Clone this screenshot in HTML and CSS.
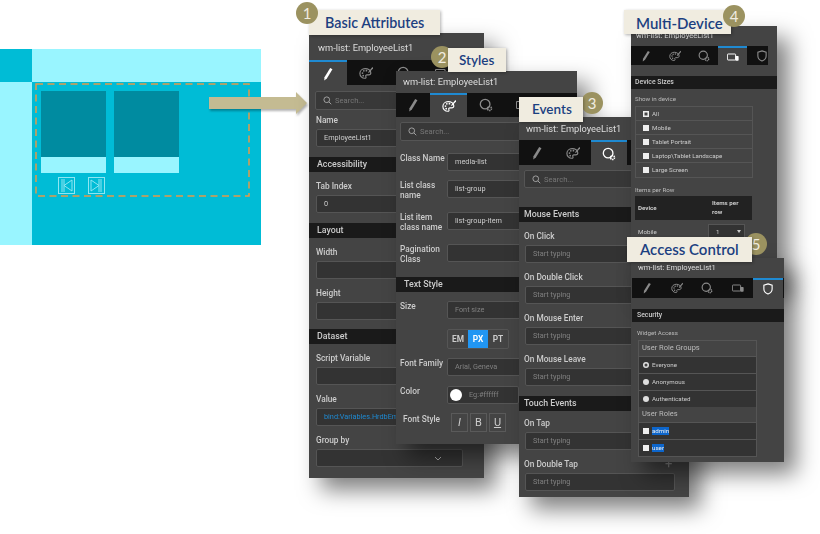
FILE: index.html
```html
<!DOCTYPE html>
<html lang="en">
<head>
  <meta charset="UTF-8" />
  <title>List widget properties</title>
  <link rel="stylesheet" href="styles.css">
</head>
<body>

  <svg class="defs" width="0" height="0">
    <symbol id="i-pencil" viewBox="0 0 16 16"><path d="M10.5 1.2l2.6 1.5-6.4 10.4-3 2.2.3-3.7z" fill="currentColor"/></symbol>
    <symbol id="i-palette" viewBox="0 0 16 16">
      <path d="M7 3C3.500 3 1 5.500 1 8.500S3.500 14 6.500 14c1.600 0 1.800-1 1.300-2-.5-1 .2-1.800 1.300-1.800H11c1.500 0 2.500-1 2.500-2.200C13.500 5 10.500 3 7 3z" fill="none" stroke="currentColor" stroke-width="1.300"/>
      <circle cx="4" cy="8" r="1" fill="currentColor"/><circle cx="5.500" cy="5.500" r="1" fill="currentColor"/><circle cx="8.500" cy="5.300" r="1" fill="currentColor"/><circle cx="4.800" cy="11" r="1" fill="currentColor"/>
      <path d="M15.300 1l-5 6 1 1 5-5.500z" fill="currentColor"/>
    </symbol>
    <symbol id="i-events" viewBox="0 0 16 16">
      <circle cx="7" cy="7" r="5.500" fill="none" stroke="currentColor" stroke-width="1.500"/>
      <circle cx="12" cy="12" r="2.300" fill="none" stroke="currentColor" stroke-width="1.800" stroke-dasharray="1.500 .7"/>
    </symbol>
    <symbol id="i-device" viewBox="0 0 16 16">
      <path d="M1.500 4h9a1 1 0 0 1 1 1v6a1 1 0 0 1-1 1h-9a1 1 0 0 1-1-1V5a1 1 0 0 1 1-1z" fill="none" stroke="currentColor" stroke-width="1.300"/>
      <rect x="11" y="6.500" width="4.500" height="6.500" rx="1" fill="currentColor"/>
    </symbol>
    <symbol id="i-shield" viewBox="0 0 16 16"><path d="M8 1.200l5.500 1.800v5c0 3.500-3 5.800-5.500 6.800-2.500-1-5.500-3.300-5.500-6.800V3z" fill="none" stroke="currentColor" stroke-width="1.500"/></symbol>
    <symbol id="i-search" viewBox="0 0 12 12"><circle cx="5" cy="5" r="3.800" fill="none" stroke="currentColor" stroke-width="1.200"/><path d="M8 8l3 3" stroke="currentColor" stroke-width="1.200"/></symbol>
  </svg>

  <div class="stage">

    <div class="wire">
      <div class="wire-corner"></div>
      <div class="wire-top"></div>
      <div class="wire-side"></div>
      <div class="wire-main">
        <div class="dash-box">
          <svg class="dash-line" width="215" height="114"><rect x="1" y="1" width="213" height="112" /></svg>
          <div class="cards">
            <div class="card"><div class="card-img"></div><div class="card-txt"></div></div>
            <div class="card"><div class="card-img"></div><div class="card-txt"></div></div>
          </div>
          <div class="pager">
            <span class="pager-btn"><svg width="17" height="17" viewBox="0 0 17 17"><path d="M4 2v13M6 2v13M14 3L6 8.500l8 5.500z"/></svg></span>
            <span class="pager-btn"><svg width="17" height="17" viewBox="0 0 17 17"><path d="M13 2v13M11 2v13M3 3l8 5.500L3 14z"/></svg></span>
          </div>
        </div>
      </div>
    </div>

    <svg class="arrow" width="104" height="30" viewBox="0 0 104 30"><path d="M0 7h87V2l11 11-11 11v-5H0z"/></svg>

    <!-- panel 1 -->
    <section class="panel p-basic">
      <div class="title">wm-list: EmployeeList1</div>
      <div class="tabs">
        <span class="tab on"><svg class="ico"><use href="#i-pencil"/></svg></span>
        <span class="tab"><svg class="ico"><use href="#i-palette"/></svg></span>
        <span class="tab"><svg class="ico"><use href="#i-events"/></svg></span>
        <span class="tab"><svg class="ico"><use href="#i-device"/></svg></span>
      </div>
      <div class="search"><svg class="ico-s"><use href="#i-search"/></svg>Search...</div>
      <div class="field first"><label>Name</label><div class="input val">EmployeeList1</div></div>
      <h3 class="sec">Accessibility</h3>
      <div class="field"><label>Tab Index</label><div class="input val">0</div></div>
      <h3 class="sec">Layout</h3>
      <div class="field"><label>Width</label><div class="input"></div></div>
      <div class="field"><label>Height</label><div class="input"></div></div>
      <h3 class="sec near">Dataset</h3>
      <div class="field"><label>Script Variable</label><div class="input"></div></div>
      <div class="field"><label>Value</label><div class="input link">bind:Variables.HrdbEm</div></div>
      <div class="field"><label>Group by</label>
        <div class="input chev"><svg width="8" height="5" viewBox="0 0 8 5"><path d="M1 1l3 3 3-3"/></svg></div>
      </div>
    </section>

    <!-- panel 2 -->
    <section class="panel p-styles">
      <div class="title">wm-list: EmployeeList1</div>
      <div class="tabs">
        <span class="tab"><svg class="ico"><use href="#i-pencil"/></svg></span>
        <span class="tab on"><svg class="ico"><use href="#i-palette"/></svg></span>
        <span class="tab"><svg class="ico"><use href="#i-events"/></svg></span>
        <span class="tab"><svg class="ico"><use href="#i-device"/></svg></span>
      </div>
      <div class="search"><svg class="ico-s"><use href="#i-search"/></svg>Search...</div>
      <div class="row tight"><label>Class Name</label><div class="input val">media-list</div></div>
      <div class="row"><label>List class name</label><div class="input val">list-group</div></div>
      <div class="row"><label>List item class name</label><div class="input val">list-group-item</div></div>
      <div class="row gap13"><label>Pagination Class</label><div class="input"></div></div>
      <h3 class="sec">Text Style</h3>
      <div class="row gap10"><label>Size</label><div class="input hint">Font size</div></div>
      <div class="row gap9"><label></label>
        <div class="units"><span>EM</span><span class="on">PX</span><span>PT</span></div>
      </div>
      <div class="row gap10"><label>Font Family</label><div class="input hint">Arial, Geneva</div></div>
      <div class="row gap9"><label>Color</label>
        <div class="input color"><span class="swatch"></span><span class="hint-txt">Eg:#ffffff</span></div>
      </div>
      <div class="row"><label class="inset">Font Style</label>
        <div class="fstyle"><span class="it">I</span><span>B</span><span class="un">U</span></div>
      </div>
    </section>

    <!-- panel 3 -->
    <section class="panel p-events">
      <div class="title">wm-list: EmployeeList1</div>
      <div class="tabs">
        <span class="tab"><svg class="ico"><use href="#i-pencil"/></svg></span>
        <span class="tab"><svg class="ico"><use href="#i-palette"/></svg></span>
        <span class="tab on"><svg class="ico"><use href="#i-events"/></svg></span>
        <span class="tab"><svg class="ico"><use href="#i-device"/></svg></span>
      </div>
      <div class="search"><svg class="ico-s"><use href="#i-search"/></svg>Search...</div>
      <h3 class="sec">Mouse Events</h3>
      <div class="field"><label>On Click</label><div class="input hint">Start typing</div></div>
      <div class="field"><label>On Double Click</label><div class="input hint">Start typing</div></div>
      <div class="field"><label>On Mouse Enter</label><div class="input hint">Start typing</div></div>
      <div class="field"><label>On Mouse Leave</label><div class="input hint">Start typing</div></div>
      <h3 class="sec">Touch Events</h3>
      <div class="field"><label>On Tap</label><div class="input hint">Start typing</div></div>
      <div class="field"><label>On Double Tap</label><div class="input hint">Start typing</div></div>
      <span class="plus">+</span>
    </section>

    <!-- panel 4 -->
    <section class="panel p-device">
      <div class="title">wm-list: EmployeeList1</div>
      <div class="tabs">
        <span class="tab"><svg class="ico"><use href="#i-pencil"/></svg></span>
        <span class="tab"><svg class="ico"><use href="#i-palette"/></svg></span>
        <span class="tab"><svg class="ico"><use href="#i-events"/></svg></span>
        <span class="tab on"><svg class="ico"><use href="#i-device"/></svg></span>
        <span class="tab"><svg class="ico"><use href="#i-shield"/></svg></span>
      </div>
      <h3 class="sec">Device Sizes</h3>
      <div class="cap">Show in device</div>
      <ul class="checks">
        <li><span class="box checked"></span>All</li>
        <li><span class="box"></span>Mobile</li>
        <li><span class="box"></span>Tablet Portrait</li>
        <li><span class="box"></span>Laptop\Tablet Landscape</li>
        <li><span class="box"></span>Large Screen</li>
      </ul>
      <div class="cap">Items per Row</div>
      <div class="grid-head"><b>Device</b><b>Items per row</b></div>
      <div class="grid-row"><span>Mobile</span><span class="mini-select">1<i></i></span></div>
    </section>

    <!-- panel 5 -->
    <section class="panel p-access">
      <div class="title">wm-list: EmployeeList1</div>
      <div class="tabs">
        <span class="tab"><svg class="ico"><use href="#i-pencil"/></svg></span>
        <span class="tab"><svg class="ico"><use href="#i-palette"/></svg></span>
        <span class="tab"><svg class="ico"><use href="#i-events"/></svg></span>
        <span class="tab"><svg class="ico"><use href="#i-device"/></svg></span>
        <span class="tab on"><svg class="ico"><use href="#i-shield"/></svg></span>
      </div>
      <h3 class="sec">Security</h3>
      <div class="cap">Widget Access</div>
      <div class="roles">
        <div class="role-head">User Role Groups</div>
        <div class="role"><span class="radio sel"></span>Everyone</div>
        <div class="role"><span class="radio"></span>Anonymous</div>
        <div class="role"><span class="radio"></span>Authenticated</div>
        <div class="role-head">User Roles</div>
        <div class="role"><span class="box"></span><mark>admin</mark></div>
        <div class="role"><span class="box"></span><mark>user</mark></div>
      </div>
    </section>

    <!-- numbered callouts: 2, 3 and 5 sit behind their label, 1 and 4 in front -->
    <div class="note n1">Basic Attributes</div>
    <span class="num c1">1</span>
    <span class="num c2">2</span>
    <div class="note n2">Styles</div>
    <span class="num c3">3</span>
    <div class="note n3">Events</div>
    <div class="note n4">Multi-Device</div>
    <span class="num c4">4</span>
    <span class="num c5">5</span>
    <div class="note n5">Access Control</div>

  </div>
</body>
</html>
```

FILE: styles.css
```css
html, body {
  margin: 0;
  background: #fff;
}

body {
  font-family: Roboto, "Liberation Sans", sans-serif;
  overflow: hidden;
}

.defs {
  position: absolute;
}

.stage {
  position: relative;
  width: 820px;
  height: 534px;
  overflow: hidden;
}

/* wireframe on the left */
.wire {
  position: absolute;
  left: 0;
  top: 49px;
  display: grid;
  grid-template-columns: 32px 229px;
  grid-template-rows: 33px 163px;
}

.wire-corner { background: #00bcd6; }
.wire-top, .wire-side { background: #99f5ff; }
.wire-main { background: #00bcd6; }

.dash-box {
  position: relative;
  width: 215px;
  height: 114px;
  margin: 1px 0 0 3px;
  padding: 8px 0 0 6px;
  box-sizing: border-box;
}

.dash-line {
  position: absolute;
  left: 0;
  top: 0;
}

.dash-line rect {
  fill: none;
  stroke: #e3994a;
  stroke-width: 1.5;
  stroke-dasharray: 7 4.5;
}

.cards {
  display: flex;
  gap: 8px;
}

.card {
  width: 65px;
}

.card-img {
  height: 66px;
  background: #008ba0;
}

.card-txt {
  height: 16px;
  background: #99f5ff;
}

.pager {
  display: flex;
  gap: 13px;
  margin: 4px 0 0 17px;
}

.pager-btn {
  display: block;
  width: 17px;
  height: 17px;
  box-sizing: border-box;
  border: 1px solid #8fe6f2;
}

.pager-btn svg {
  display: block;
  margin: -1px;
  fill: none;
  stroke: #8fe6f2;
  stroke-width: 1;
}

.arrow {
  position: absolute;
  left: 209px;
  top: 90px;
  fill: #c4bb92;
  filter: drop-shadow(1px 2px 1px rgba(0, 0, 0, .3));
}

/* property panels */
.panel {
  position: absolute;
  background: #444;
  color: #ccc;
  overflow: hidden;
  box-sizing: border-box;
  font-size: 8.3px;
  filter: blur(.3px) drop-shadow(12px 12px 11px rgba(0, 0, 0, .5));
}

.p-basic { left: 309px; top: 33px; width: 175px; height: 445px; z-index: 1; }
.p-styles { left: 396px; top: 71px; width: 181px; height: 373px; z-index: 2; }
.p-events { left: 519px; top: 117px; width: 170px; height: 380px; z-index: 3; }
.p-device { left: 631px; top: 26px; width: 146px; height: 260px; z-index: 4; }
.p-access { left: 631px; top: 258px; width: 153px; height: 204px; z-index: 5; }

.title {
  height: 27px;
  line-height: 29px;
  padding-left: 9px;
  font-size: 9.3px;
  color: #ddd;
  white-space: nowrap;
}

.tabs {
  display: flex;
  height: 25px;
  background: #111;
}

.tab {
  display: flex;
  align-items: center;
  justify-content: center;
  flex: 0 0 38px;
  color: #8a8a8a;
  box-sizing: border-box;
}

.tab.on {
  background: #444;
  color: #fff;
  border-top: 2px solid #1f8ad2;
}

.ico {
  width: 14px;
  height: 14px;
}

.search {
  display: flex;
  align-items: center;
  gap: 3px;
  height: 19px;
  margin: 6px 6px 0;
  padding-left: 7px;
  box-sizing: border-box;
  width: 200px;
  background: #383838;
  border: 1px solid #555;
  border-radius: 2px;
  color: #777;
  font-size: 7.6px;
}

.ico-s {
  width: 9px;
  height: 9px;
  color: #aaa;
}

.sec {
  height: 15px;
  line-height: 15px;
  margin: 10px 0 8px;
  padding-left: 8px;
  background: #1a1a1a;
  color: #ccc;
  font-size: 8.8px;
  font-weight: 500;
}

.field {
  margin-bottom: 8px;
  padding: 0 7px;
}

.field.first {
  margin-top: 4px;
  margin-bottom: 0;
}

.sec.near {
  margin-top: 9px;
}

.field label {
  display: block;
  height: 12px;
  line-height: 12px;
  margin-bottom: 3px;
  font-weight: 500;
}

.input {
  height: 18px;
  line-height: 16px;
  width: 147px;
  padding-left: 7px;
  box-sizing: border-box;
  background: #333;
  border: 1px solid #555;
  border-radius: 2px;
  font-size: 7.3px;
  white-space: nowrap;
  overflow: hidden;
}

.val { color: #ccc; }
.hint { color: #808080; }
.link { color: #1f8ad2; }

.chev {
  display: flex;
  align-items: center;
  justify-content: flex-end;
  padding-right: 20px;
}

.chev svg {
  fill: none;
  stroke: #aaa;
}

/* panel 2 rows */
.p-styles .title {
  height: 22px;
  line-height: 21px;
  padding-left: 7px;
}

.p-styles .tabs { height: 24px; }
.p-styles .tab { flex-basis: 37px; }
.p-styles .tab:first-child { flex-basis: 34px; }

.p-styles .search {
  margin: 5px 4px 12px;
}

.row {
  display: flex;
  align-items: flex-start;
  margin-bottom: 12px;
  padding-left: 4px;
}

.row.tight { margin-bottom: 9px; }
.row.gap13 { margin-bottom: 13px; }
.row.gap10 { margin-bottom: 10px; }
.row.gap9 { margin-bottom: 9px; }

.row label {
  flex: 0 0 47px;
  line-height: 10px;
  font-weight: 500;
  min-height: 18px;
}

.row .input {
  width: 128px;
}

.p-styles .sec {
  margin: 0 0 9px;
}

.units {
  display: flex;
  width: 62px;
  height: 20px;
  box-sizing: border-box;
  border: 1px solid #555;
  border-radius: 2px;
  text-align: center;
  line-height: 18px;
  font-weight: 700;
}

.units span { flex: 1; }
.units .on { background: #2196f3; color: #fff; }

.row .color {
  display: flex;
  align-items: center;
  width: 72px;
  padding-left: 2px;
}

.swatch {
  flex: none;
  width: 12px;
  height: 12px;
  border-radius: 50%;
  background: #fff;
  margin-right: 7px;
}

.hint-txt { color: #808080; }

.row label.inset {
  box-sizing: border-box;
  padding: 1px 0 0 3px;
  white-space: nowrap;
}

.fstyle {
  display: flex;
  gap: 2px;
  margin-left: 4px;
}

.fstyle span {
  width: 17px;
  height: 19px;
  box-sizing: border-box;
  border: 1px solid #5a5a5a;
  text-align: center;
  line-height: 18px;
  font-size: 11px;
}

.fstyle .it { font-style: italic; }
.fstyle .un { text-decoration: underline; }

/* panel 3 */
.p-events .title {
  height: 23px;
  line-height: 23px;
  padding-left: 7px;
}

.p-events .tab { flex-basis: 36px; }

.p-events .search {
  margin: 5px 5px 19px;
  height: 18px;
}

.p-events .sec { margin: 0 0 8px; padding-left: 5px; }
.p-events .field { padding: 0 5px 0 6px; }
.p-events .field label { margin-left: -1px; }
.p-events .input { width: 150px; }
.p-events .field + .sec { margin: 10px 0 6px; }

.plus {
  position: absolute;
  left: 146px;
  top: 339px;
  font-size: 13px;
  color: #888;
}

/* panel 4 */
.p-device {
  font-size: 6.2px;
}

.p-device .title {
  height: 20px;
  line-height: 19px;
  padding-left: 5px;
  font-size: 7.6px;
}

.p-device .tabs {
  width: 137px;
  height: 19px;
}

.p-device .tab { flex-basis: 29px; }

.p-device .ico,
.p-access .ico {
  width: 12px;
  height: 12px;
}

.p-device .sec,
.p-access .sec {
  height: 13px;
  line-height: 13px;
  margin: 11px 0 6px;
  padding-left: 4px;
  font-size: 6.9px;
}

.cap {
  height: 8px;
  line-height: 8px;
  padding-left: 4px;
  color: #bbb;
}

.checks {
  list-style: none;
  width: 118px;
  margin: 3px 0 8px 4px;
  padding: 0;
  box-sizing: border-box;
  border: 1px solid #555;
}

.checks li {
  display: flex;
  align-items: center;
  height: 14px;
  box-sizing: border-box;
  padding-left: 7px;
  border-bottom: 1px solid #555;
}

.checks li:last-child { border-bottom: 0; }

.box {
  flex: none;
  width: 6px;
  height: 6px;
  margin-right: 3px;
  background: #eee;
}

.box.checked {
  box-shadow: inset 0 0 0 1.5px #eee, inset 0 0 0 3px #444;
}

.grid-head {
  display: flex;
  align-items: center;
  width: 117px;
  height: 24px;
  margin: 2px 0 0 4px;
  padding-left: 3px;
  box-sizing: border-box;
  background: #222;
  line-height: 9px;
}

.grid-head b:first-child { flex: 0 0 74px; }
.grid-head b:last-child { width: 32px; }

.grid-row {
  display: flex;
  align-items: center;
  margin: 4px 0 0 7px;
}

.grid-row span:first-child { flex: 0 0 70px; }

.mini-select {
  position: relative;
  width: 37px;
  height: 16px;
  padding-left: 7px;
  line-height: 14px;
  box-sizing: border-box;
  border: 1px solid #555;
  background: #333;
}

.mini-select i {
  position: absolute;
  right: 3px;
  top: 5px;
  border: 2px solid transparent;
  border-top: 3px solid #ccc;
}

/* panel 5 */
.p-access {
  font-size: 6.2px;
}

.p-access .title {
  height: 20px;
  line-height: 20px;
  padding-left: 7px;
  font-size: 7.6px;
}

.p-access .tabs {
  height: 20px;
  margin-left: 1px;
}

.p-access .tab { flex-basis: 30.2px; }

.p-access .sec {
  margin: 11px 0 7px 1px;
  padding-left: 5px;
}

.p-access .cap { padding-left: 6px; }

.roles {
  width: 119px;
  margin: 3px 0 0 7px;
  box-sizing: border-box;
  border: 1px solid #555;
  background: #3c3c3c;
}

.role-head {
  height: 15px;
  line-height: 13px;
  padding-left: 3px;
  font-size: 7.5px;
  background: #444;
  color: #bbb;
}

.role {
  display: flex;
  align-items: center;
  height: 17px;
  padding: 0 0 1px 4px;
  box-sizing: border-box;
  border-top: 1px solid #555;
  background: #333;
}

.radio {
  flex: none;
  width: 6px;
  height: 6px;
  margin-right: 3px;
  border-radius: 50%;
  background: #ddd;
}

.radio.sel {
  box-shadow: inset 0 0 0 1.5px #ddd;
  background: #444;
}

mark {
  background: #0d66cc;
  color: #eee;
}

/* annotations */
.note {
  position: absolute;
  z-index: 6;
  background: #f0ece0;
  color: #1c3f80;
  font-family: Lato, "Open Sans", sans-serif;
  font-size: 15px;
  font-weight: 600;
  white-space: nowrap;
  box-sizing: border-box;
  box-shadow: 1px 1px 3px rgba(0, 0, 0, .3);
}

.num {
  position: absolute;
  z-index: 6;
  width: 22px;
  height: 22px;
  border-radius: 50%;
  background: #9b9260;
  color: #f0ece0;
  font-family: Lato, "Open Sans", sans-serif;
  font-size: 15px;
  line-height: 22px;
  text-align: center;
}

.n1 { left: 309px; top: 10px; width: 131px; height: 25px; line-height: 26px; padding-left: 16px; font-size: 14.3px; }
.n2 { left: 448px; top: 48px; width: 58px; height: 24px; line-height: 25px; padding-left: 11px; font-size: 13.5px; }
.n3 { left: 519px; top: 97px; width: 64px; height: 25px; line-height: 25px; padding-left: 13px; font-size: 13.5px; }
.n4 { left: 624px; top: 10px; width: 107px; height: 24px; line-height: 26px; padding-left: 12px; }
.n5 { left: 627px; top: 237px; width: 125px; height: 25px; line-height: 25px; padding-left: 13px; }

.c1 { left: 296px; top: 2px; }
.c2 { left: 431px; top: 46px; }
.c3 { left: 581px; top: 92px; }
.c4 { left: 723px; top: 5px; }
.c5 { left: 745px; top: 233px; }
```
